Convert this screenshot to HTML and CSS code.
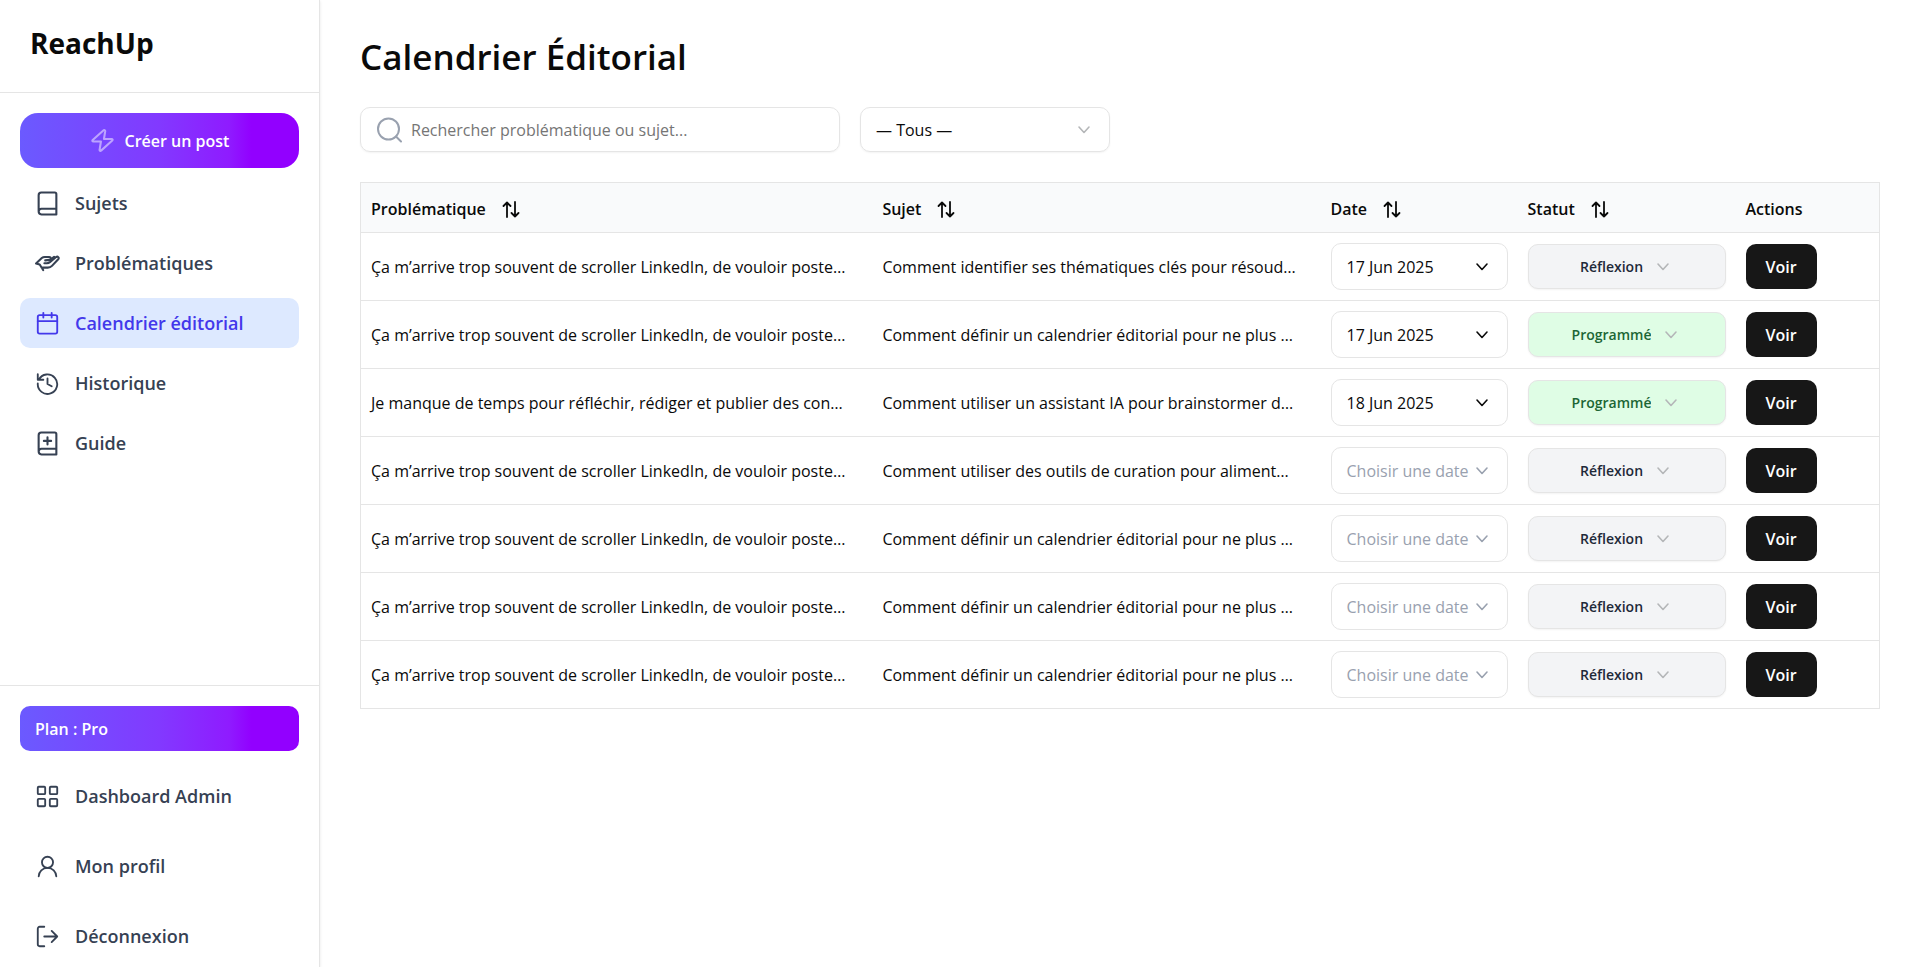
FILE: index.html
```html
<!DOCTYPE html>
<html lang="fr">
<head>
<meta charset="utf-8">
<meta name="viewport" content="width=device-width, initial-scale=1">
<title>ReachUp – Calendrier Éditorial</title>
<link rel="stylesheet" href="styles.css">
</head>
<body>
<svg class="sprite" aria-hidden="true">
  <symbol id="i-bolt" viewBox="0 0 24 24"><path d="M12.800 2.400 2.600 11.600c-.6.6-.3 1.400.6 1.400h7.300l-1.300 8c-.1.900.8 1.300 1.400.7l10.800-9.700c.6-.6.2-1.500-.6-1.500h-7.400l1.200-7.400c.1-.9-1-1.400-1.800-.7z"/></symbol>
  <symbol id="i-book" viewBox="0 0 24 24"><path d="M3.500 19.500v-15.500a2.500 2.500 0 0 1 2.500-2.500h13a1.500 1.500 0 0 1 1.500 1.500v19.500H6.200a3 3 0 0 1-2.700-3 3 3 0 0 1 2.700-2.500h14.300"/></symbol>
  <symbol id="i-guide" viewBox="0 0 24 24"><path d="M3.500 19.500v-15.500a2.500 2.500 0 0 1 2.500-2.500h13a1.500 1.500 0 0 1 1.500 1.500v19.500H6.200a3 3 0 0 1-2.700-3 3 3 0 0 1 2.700-2.500h14.300M12 6v7M8.500 9.500h7"/></symbol>
  <symbol id="i-hand" viewBox="0 0 24 24"><path d="M1 12 6.500 6.800c.9-.8 1.700-1.100 2.900-1.100h4.300c1.800 0 1.900 2.600.1 2.800l-4 .5M1 12l3.500 1 3.300 5.300M6.500 16h5.800c1.700 0 2.900-.5 4-1.700l6-6.400c1.200-1.500-.5-3.200-2-2.100l-6 4.900c-.9.700-1.700 1-2.800 1H9M15.300 8l3-2.300"/></symbol>
  <symbol id="i-calendar" viewBox="-1.500 -1.500 27 27"><rect x="1.500" y="3" width="21" height="20" rx="2"/><path d="M1.500 9.500h21M7.500 .5v5M16.500 .5v5"/></symbol>
  <symbol id="i-history" viewBox="-1.500 -1.500 27 27"><path d="M2.600 8A10.500 10.500 0 1 1 1.500 12M1.500 2v6h6M12 6.500v6l4.500 2.500"/></symbol>
  <symbol id="i-grid" viewBox="-1.500 -1.500 27 27"><rect x="1.500" y="1.500" width="8" height="8" rx="1"/><rect x="14.500" y="1.500" width="8" height="8" rx="1"/><rect x="1.500" y="14.500" width="8" height="8" rx="1"/><rect x="14.500" y="14.500" width="8" height="8" rx="1"/></symbol>
  <symbol id="i-user" viewBox="-1.500 -1.500 27 27"><circle cx="12" cy="7.500" r="6"/><path d="M2.500 22.500c.3-5 4-9 9.500-9s9.200 4 9.500 9"/></symbol>
  <symbol id="i-logout" viewBox="-1.500 -1.500 27 27"><path d="M8.500 1.500h-5a2 2 0 0 0-2 2v17a2 2 0 0 0 2 2h5M8.500 12h14M16.500 6l6 6-6 6"/></symbol>
  <symbol id="i-search" viewBox="0 0 26 26"><circle cx="12.500" cy="12" r="10.500"/><path d="m20 19.500 5 5"/></symbol>
  <symbol id="i-sort" viewBox="0 0 20 20"><path d="M6 18V3.500M2.500 7 6 3.500 9.500 7M14 3v14.500M10.500 14l3.500 3.500 3.500-3.500"/></symbol>
  <symbol id="i-chevron" viewBox="0 0 20 20"><path d="m5 7 5 5.500L15 7"/></symbol>
</svg>
<div class="app">
  <aside class="sidebar">
    <div class="brand">ReachUp</div>
    <nav class="nav" aria-label="Navigation principale">
      <button class="create" type="button"><svg class="icon"><use href="#i-bolt"/></svg>Créer un post</button>
      <a class="link" href="#sujets"><svg class="icon"><use href="#i-book"/></svg>Sujets</a>
      <a class="link" href="#problematiques"><svg class="icon"><use href="#i-hand"/></svg>Problématiques</a>
      <a class="link active" href="#calendrier" aria-current="page"><svg class="icon"><use href="#i-calendar"/></svg>Calendrier éditorial</a>
      <a class="link" href="#historique"><svg class="icon"><use href="#i-history"/></svg>Historique</a>
      <a class="link" href="#guide"><svg class="icon"><use href="#i-guide"/></svg>Guide</a>
    </nav>
    <div class="account">
      <div class="plan">Plan : Pro</div>
      <a class="link" href="#admin"><svg class="icon"><use href="#i-grid"/></svg>Dashboard Admin</a>
      <a class="link" href="#profil"><svg class="icon"><use href="#i-user"/></svg>Mon profil</a>
      <a class="link" href="#deconnexion"><svg class="icon"><use href="#i-logout"/></svg>Déconnexion</a>
    </div>
  </aside>
  <main class="main">
    <h1 class="title">Calendrier Éditorial</h1>
    <div class="filters">
      <label class="search"><svg class="icon"><use href="#i-search"/></svg><input type="search" placeholder="Rechercher problématique ou sujet..." aria-label="Rechercher"></label>
      <label class="filter"><select aria-label="Filtrer par statut"><option>— Tous —</option><option>Réflexion</option><option>Programmé</option></select><svg class="chevron"><use href="#i-chevron"/></svg></label>
    </div>
    <table class="table">
      <colgroup><col class="c-problem"><col class="c-subject"><col class="c-date"><col class="c-status"><col class="c-actions"></colgroup>
      <thead>
        <tr>
          <th><button class="sort" type="button">Problématique<svg><use href="#i-sort"/></svg></button></th>
          <th><button class="sort" type="button">Sujet<svg><use href="#i-sort"/></svg></button></th>
          <th><button class="sort" type="button">Date<svg><use href="#i-sort"/></svg></button></th>
          <th><button class="sort" type="button">Statut<svg><use href="#i-sort"/></svg></button></th>
          <th>Actions</th>
        </tr>
      </thead>
      <tbody>
        <tr>
          <td>Ça m’arrive trop souvent de scroller LinkedIn, de vouloir poste…</td>
          <td>Comment identifier ses thématiques clés pour résoud…</td>
          <td><button class="date" type="button">17 Jun 2025<svg class="chevron"><use href="#i-chevron"/></svg></button></td>
          <td><label class="status"><select aria-label="Statut"><option>Réflexion</option><option>Programmé</option></select><svg class="chevron"><use href="#i-chevron"/></svg></label></td>
          <td><button class="view" type="button">Voir</button></td>
        </tr>
        <tr>
          <td>Ça m’arrive trop souvent de scroller LinkedIn, de vouloir poste…</td>
          <td>Comment définir un calendrier éditorial pour ne plus …</td>
          <td><button class="date" type="button">17 Jun 2025<svg class="chevron"><use href="#i-chevron"/></svg></button></td>
          <td><label class="status planned"><select aria-label="Statut"><option>Réflexion</option><option selected>Programmé</option></select><svg class="chevron"><use href="#i-chevron"/></svg></label></td>
          <td><button class="view" type="button">Voir</button></td>
        </tr>
        <tr>
          <td>Je manque de temps pour réfléchir, rédiger et publier des con…</td>
          <td>Comment utiliser un assistant IA pour brainstormer d…</td>
          <td><button class="date" type="button">18 Jun 2025<svg class="chevron"><use href="#i-chevron"/></svg></button></td>
          <td><label class="status planned"><select aria-label="Statut"><option>Réflexion</option><option selected>Programmé</option></select><svg class="chevron"><use href="#i-chevron"/></svg></label></td>
          <td><button class="view" type="button">Voir</button></td>
        </tr>
        <tr>
          <td>Ça m’arrive trop souvent de scroller LinkedIn, de vouloir poste…</td>
          <td>Comment utiliser des outils de curation pour aliment…</td>
          <td><button class="date empty" type="button">Choisir une date<svg class="chevron"><use href="#i-chevron"/></svg></button></td>
          <td><label class="status"><select aria-label="Statut"><option>Réflexion</option><option>Programmé</option></select><svg class="chevron"><use href="#i-chevron"/></svg></label></td>
          <td><button class="view" type="button">Voir</button></td>
        </tr>
        <tr>
          <td>Ça m’arrive trop souvent de scroller LinkedIn, de vouloir poste…</td>
          <td>Comment définir un calendrier éditorial pour ne plus …</td>
          <td><button class="date empty" type="button">Choisir une date<svg class="chevron"><use href="#i-chevron"/></svg></button></td>
          <td><label class="status"><select aria-label="Statut"><option>Réflexion</option><option>Programmé</option></select><svg class="chevron"><use href="#i-chevron"/></svg></label></td>
          <td><button class="view" type="button">Voir</button></td>
        </tr>
        <tr>
          <td>Ça m’arrive trop souvent de scroller LinkedIn, de vouloir poste…</td>
          <td>Comment définir un calendrier éditorial pour ne plus …</td>
          <td><button class="date empty" type="button">Choisir une date<svg class="chevron"><use href="#i-chevron"/></svg></button></td>
          <td><label class="status"><select aria-label="Statut"><option>Réflexion</option><option>Programmé</option></select><svg class="chevron"><use href="#i-chevron"/></svg></label></td>
          <td><button class="view" type="button">Voir</button></td>
        </tr>
        <tr>
          <td>Ça m’arrive trop souvent de scroller LinkedIn, de vouloir poste…</td>
          <td>Comment définir un calendrier éditorial pour ne plus …</td>
          <td><button class="date empty" type="button">Choisir une date<svg class="chevron"><use href="#i-chevron"/></svg></button></td>
          <td><label class="status"><select aria-label="Statut"><option>Réflexion</option><option>Programmé</option></select><svg class="chevron"><use href="#i-chevron"/></svg></label></td>
          <td><button class="view" type="button">Voir</button></td>
        </tr>
      </tbody>
    </table>
  </main>
</div>
</body>
</html>
```

FILE: styles.css
```css
:root {
  --ink: #0a0a0a;
  --line: #e5e5e5;
  --nav: #364153;
  --brand-gradient: linear-gradient(90deg, #6b5aff 0%, #8239ff 50%, #8f1bff 75%, #9200ff 83%, #9200ff 100%);
}
* { box-sizing: border-box; }
body {
  margin: 0;
  background: #fff;
  color: var(--ink);
  font: 16px/24px "Segoe UI", "Open Sans", "Noto Sans", sans-serif;
}
button, input, select { font: inherit; color: inherit; }
button { cursor: pointer; }
svg { fill: none; stroke: currentColor; stroke-width: 2; stroke-linecap: round; stroke-linejoin: round; flex: none; }
.sprite { display: none; }
.app { display: flex; height: 100vh; overflow: hidden; }

.sidebar {
  display: flex;
  flex-direction: column;
  flex: none;
  width: 320px;
  border-right: 1px solid var(--line);
  box-shadow: 0 1px 3px rgba(0, 0, 0, .1);
}
.brand {
  padding: 23px 30px 29px;
  border-bottom: 1px solid var(--line);
  font-size: 28px;
  line-height: 40px;
  font-weight: 700;
}
.nav { display: flex; flex: 1; flex-direction: column; gap: 10px; padding: 20px; }
.icon { width: 25px; height: 25px; }
.create {
  display: flex;
  align-items: center;
  justify-content: center;
  gap: 10px;
  height: 55px;
  border: 0;
  border-radius: 18px;
  background: var(--brand-gradient);
  color: #fff;
  font-weight: 600;
}
.create .icon { opacity: .5; }
.link {
  display: flex;
  align-items: center;
  gap: 15px;
  height: 50px;
  padding: 0 15px;
  border-radius: 10px;
  color: var(--nav);
  font-size: 18px;
  font-weight: 600;
  text-decoration: none;
}
.link.active { background: #dde9ff; color: #4338eb; }
.account {
  display: flex;
  flex-direction: column;
  gap: 20px;
  padding: 20px 20px 6px;
  border-top: 1px solid var(--line);
}
.plan {
  padding: 11px 15px 10px;
  border-radius: 10px;
  background: var(--brand-gradient);
  color: #fff;
  font-weight: 600;
}

.main { flex: 1; min-width: 0; padding: 34px 38px 40px 40px; overflow: auto; }
.title { margin: 0 0 28px; font-size: 35px; line-height: 45px; font-weight: 600; }
.filters { display: flex; gap: 20px; margin-bottom: 30px; }
.search, .filter {
  display: flex;
  align-items: center;
  height: 45px;
  padding: 0 15px;
  border: 1px solid var(--line);
  border-radius: 10px;
  box-shadow: 0 1px 2px rgba(0, 0, 0, .05);
}
.search { width: 480px; gap: 9px; }
.search .icon { width: 26px; height: 26px; color: #99a1af; }
.search input { flex: 1; min-width: 0; padding: 0; border: 0; outline: 0; background: none; }
.search input::placeholder { color: #757575; }
.filter { width: 250px; }
.filter select { flex: 1; padding: 0; border: 0; outline: 0; background: none; appearance: none; }
.chevron { width: 20px; height: 20px; stroke-width: 1.6; }
.filter .chevron, .status .chevron { color: #b4b6b8; }

.table {
  width: 100%;
  border: 1px solid var(--line);
  border-collapse: collapse;
  table-layout: fixed;
  background: #fff;
}
.c-problem { width: 33.7%; }
.c-date { width: 197px; }
.c-status { width: 218px; }
.c-actions { width: 144px; }
.table tr { border-bottom: 1px solid var(--line); }
.table th { height: 50px; padding: 2px 10px 0; background: #f9fafb; font-weight: 600; text-align: left; }
.table td { height: 68px; padding: 0 10px; overflow: hidden; white-space: nowrap; }
.sort { display: flex; align-items: center; gap: 15px; padding: 0; border: 0; background: none; }
.sort svg { width: 20px; height: 20px; stroke-width: 1.8; }
.date, .status {
  display: flex;
  align-items: center;
  width: 100%;
  border: 1px solid var(--line);
  border-radius: 10px;
}
.date { justify-content: space-between; height: 47px; padding: 0 15px; background: #fff; }
.date.empty { color: #99a1af; }
.status {
  justify-content: center;
  gap: 10px;
  height: 45px;
  background: #f3f4f6;
  color: #1e2939;
  font-size: 14px;
  font-weight: 600;
  box-shadow: 0 1px 2px rgba(0, 0, 0, .05);
}
.status.planned { background: #dffde5; color: #1c6635; }
.status select { field-sizing: content; padding: 0; border: 0; outline: 0; background: none; appearance: none; }
.view {
  height: 45px;
  padding: 0 20px;
  border: 0;
  border-radius: 10px;
  background: #171717;
  color: #fff;
  font-weight: 600;
}
```
